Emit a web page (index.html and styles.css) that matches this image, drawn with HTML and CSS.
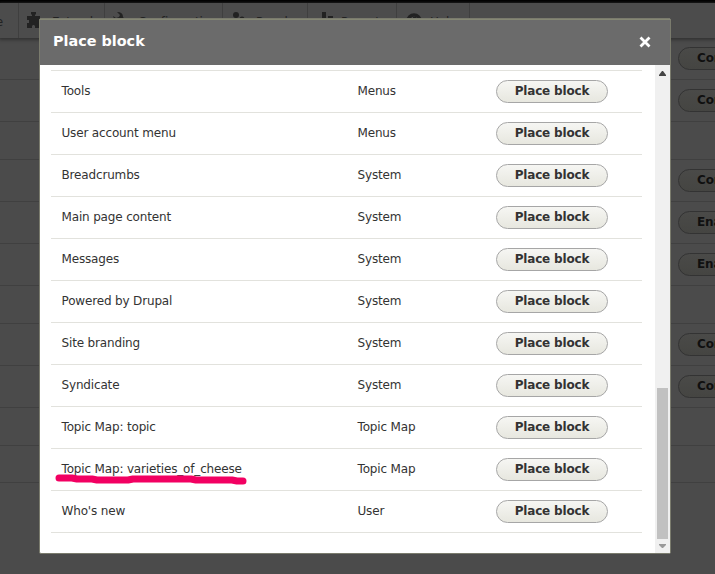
FILE: index.html
```html
<!DOCTYPE html>
<html lang="en">
<head>
<meta charset="utf-8">
<title>Place block</title>
<link rel="stylesheet" href="styles.css">
</head>
<body>
<div class="page">
  <div class="topbar"></div>
  <nav class="menu">
    <a class="item first">Appearance</a>
    <a class="item extend"><svg width="16" height="16" viewBox="0 0 16 16"><path d="M0 4h5V3L4 2V0h5v2L8 3v1h5v5h3v3h-3v4H8v-2l-1-1H6l-1 1v2H0v-5h2V8H0z"/></svg>Extend</a>
    <a class="item config"><svg width="16" height="16" viewBox="0 0 16 16"><path d="M4 0q6 0 6 5l4 5-2 2-5-4Q1 9 0 4l3 2 3-1 1-2z"/></svg>Configuration</a>
    <a class="item people"><svg width="16" height="16" viewBox="0 0 16 16"><circle cx="5" cy="3" r="3"/><circle cx="11" cy="7" r="2.5"/><path d="M0 15V9l3-2h4l3 2v6z"/></svg>People</a>
    <a class="item reports"><svg width="16" height="16" viewBox="0 0 16 16"><path d="M6 0h4v15H6zM12 4h5v11h-5z"/></svg>Reports</a>
    <a class="item help"><svg width="16" height="16" viewBox="0 0 16 16"><circle cx="9" cy="9" r="6" fill="none" stroke="#222" stroke-width="3.5"/><path d="M8 5h3v5H8z"/></svg>Help</a>
  </nav>
  <div class="list">
    <div class="line"><span class="btn">Configure</span></div>
    <div class="line"><span class="btn">Configure</span></div>
    <div class="line region"></div>
    <div class="line"><span class="btn">Configure</span></div>
    <div class="line"><span class="btn">Enable</span></div>
    <div class="line"><span class="btn">Enable</span></div>
    <div class="line region"></div>
    <div class="line"><span class="btn">Configure</span></div>
    <div class="line"><span class="btn">Configure</span></div>
    <div class="line region"></div>
    <div class="line empty"></div>
  </div>
</div>
<div class="dialog">
  <header class="title"><span>Place block</span><svg width="12" height="12" viewBox="0 0 12 12"><path d="M1.5 1.5l9 9M10.500 1.5l-9 9"/></svg></header>
  <div class="body">
    <div class="rows">
      <div class="row"><span>Tools</span><span>Menus</span><button>Place block</button></div>
      <div class="row"><span>User account menu</span><span>Menus</span><button>Place block</button></div>
      <div class="row"><span>Breadcrumbs</span><span>System</span><button>Place block</button></div>
      <div class="row"><span>Main page content</span><span>System</span><button>Place block</button></div>
      <div class="row"><span>Messages</span><span>System</span><button>Place block</button></div>
      <div class="row"><span>Powered by Drupal</span><span>System</span><button>Place block</button></div>
      <div class="row"><span>Site branding</span><span>System</span><button>Place block</button></div>
      <div class="row"><span>Syndicate</span><span>System</span><button>Place block</button></div>
      <div class="row"><span>Topic Map: topic</span><span>Topic Map</span><button>Place block</button></div>
      <div class="row marked"><span>Topic Map: varieties_of_cheese</span><span>Topic Map</span><button>Place block</button>
        <svg class="mark" width="192" height="12" viewBox="0 0 192 12"><path d="M4 4H17L22 5H37L42 6H73L78 5H136L141 6H177L182 7H188"/></svg></div>
      <div class="row"><span>Who's new</span><span>User</span><button>Place block</button></div>
    </div>
    <div class="scroll">
      <svg width="7" height="5" viewBox="0 0 7 5"><path d="M0 5V4L3 0h1l3 4v1z" fill="#444"/></svg>
      <div class="thumb"></div>
      <svg width="7" height="4" viewBox="0 0 7 4"><path d="M0 0h7v1L4 4H3L0 1z" fill="#999"/></svg>
    </div>
  </div>
</div>
</body>
</html>
```
FILE: styles.css
```css
* { box-sizing: border-box; }
body {
  margin: 0;
  height: 574px;
  overflow: hidden;
  background: #4b4b4b;
  font: 12px/16px "DejaVu Sans", sans-serif;
  letter-spacing: -0.16px;
  color: #333;
}
.page { height: 574px; overflow: hidden; }
.topbar { height: 3px; background: #000; }
.menu {
  display: flex;
  height: 35px;
  background: #4c4c4c;
  box-shadow: 0 1px 3px 1px #333;
  color: #222;
}
.menu svg { fill: #222; flex: none; margin: 9px 9px 0 0; overflow: visible; }
.item {
  display: flex;
  padding-left: 8px;
  border-right: 1px solid #3f3f3f;
  line-height: 38px;
  white-space: nowrap;
  overflow: hidden;
}
.first { width: 19px; padding: 0 15px 0 0; justify-content: flex-end; overflow: visible; }
.extend { width: 86px; }
.config { width: 118px; }
.people { width: 85px; }
.reports { width: 89px; }
.help { width: 73px; }
.line {
  height: 42px;
  padding: 9px 0 0 678px;
  border-bottom: 1px solid #404040;
}
.region { height: 38px; }
.empty { height: 37px; }
.btn {
  display: block;
  width: 96px;
  height: 23px;
  padding-left: 18px;
  border: 1px solid #333;
  border-radius: 12px;
  background: linear-gradient(#4a4a48, #454542);
  font-weight: 700;
  line-height: 20px;
  color: #101010;
}
.dialog {
  position: absolute;
  left: 39px;
  top: 18px;
  width: 632px;
  height: 536px;
  border: 1px solid #7a7b6d;
  border-radius: 2px;
  background: #fff;
  overflow: hidden;
}
.title {
  display: flex;
  justify-content: space-between;
  align-items: center;
  height: 46px;
  padding: 0 19px 2px 13px;
  border-top: 1px solid #858774;
  background: #6b6b6b;
  color: #fff;
  font-size: 14.4px;
  font-weight: 700;
  letter-spacing: 0;
}
.title span { margin-top: -2px; }
.title svg { fill: none; stroke: #fff; stroke-width: 2.8; }
.body { display: flex; height: 488px; }
.rows { flex: 1; padding: 5px 13px 0 11px; }
.row {
  display: grid;
  grid-template-columns: 296px 138.5px 112px;
  height: 42px;
  padding: 9px 0 0 10.5px;
  border-top: 1px solid #e2e2dd;
}
.row:last-child { height: 43px; border-bottom: 1px solid #e2e2dd; }
.row span { line-height: 23px; }
.row button {
  height: 23px;
  margin: 0;
  padding: 0 0 1px;
  border: 1px solid #a6a6a6;
  border-radius: 12px;
  background: linear-gradient(#f6f6f3, #e7e7df);
  color: #333;
  font: 700 12px/20px "DejaVu Sans", sans-serif;
  letter-spacing: -0.16px;
}
.marked { position: relative; }
.mark {
  position: absolute;
  left: 4px;
  top: 25px;
  fill: none;
  stroke: #f20062;
  stroke-width: 7;
  stroke-linecap: round;
  stroke-linejoin: round;
}
.scroll {
  display: flex;
  flex-direction: column;
  align-items: center;
  width: 15px;
  padding: 6px 0 5px;
  background: #f0f0f0;
}
.thumb { width: 11px; height: 151px; margin: auto 0 5px; background: #c1c1c1; }
```
